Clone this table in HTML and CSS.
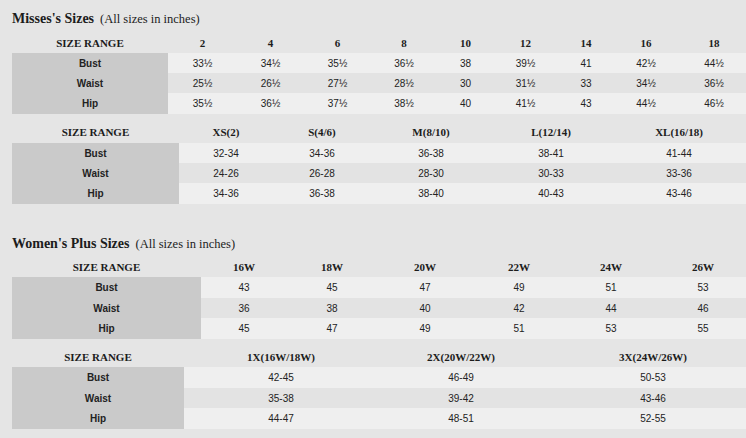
FILE: index.html
```html
<!DOCTYPE html>
<html>
<head>
<meta charset="utf-8">
<link rel="stylesheet" href="styles.css">
</head>
<body>
<div class="page">
  <h2 class="title title-first"><b>Misses's Sizes</b> <span class="note">(All sizes in inches)</span></h2>

  <table class="chart t1">
    <colgroup>
      <col style="width:156px">
      <col style="width:69px"><col style="width:67px"><col style="width:67px"><col style="width:66px"><col style="width:57px"><col style="width:63px"><col style="width:58px"><col style="width:62px"><col style="width:74px">
    </colgroup>
    <tr class="head"><th>SIZE RANGE</th><th>2</th><th>4</th><th>6</th><th>8</th><th>10</th><th>12</th><th>14</th><th>16</th><th>18</th></tr>
    <tr class="odd"><td class="label">Bust</td><td>33½</td><td>34½</td><td>35½</td><td>36½</td><td>38</td><td>39½</td><td>41</td><td>42½</td><td>44½</td></tr>
    <tr class="even"><td class="label">Waist</td><td>25½</td><td>26½</td><td>27½</td><td>28½</td><td>30</td><td>31½</td><td>33</td><td>34½</td><td>36½</td></tr>
    <tr class="odd last"><td class="label">Hip</td><td>35½</td><td>36½</td><td>37½</td><td>38½</td><td>40</td><td>41½</td><td>43</td><td>44½</td><td>46½</td></tr>
  </table>

  <table class="chart t2">
    <colgroup>
      <col style="width:167px">
      <col style="width:94px"><col style="width:98px"><col style="width:120px"><col style="width:120px"><col style="width:136px">
    </colgroup>
    <tr class="head tall"><th>SIZE RANGE</th><th>XS(2)</th><th>S(4/6)</th><th>M(8/10)</th><th>L(12/14)</th><th>XL(16/18)</th></tr>
    <tr class="odd"><td class="label">Bust</td><td>32-34</td><td>34-36</td><td>36-38</td><td>38-41</td><td>41-44</td></tr>
    <tr class="even"><td class="label">Waist</td><td>24-26</td><td>26-28</td><td>28-30</td><td>30-33</td><td>33-36</td></tr>
    <tr class="odd last"><td class="label">Hip</td><td>34-36</td><td>36-38</td><td>38-40</td><td>40-43</td><td>43-46</td></tr>
  </table>

  <h2 class="title title-second"><b>Women's Plus Sizes</b> <span class="note">(All sizes in inches)</span></h2>

  <table class="chart t3">
    <colgroup>
      <col style="width:189px">
      <col style="width:86px"><col style="width:90px"><col style="width:96px"><col style="width:92px"><col style="width:92px"><col style="width:92px">
    </colgroup>
    <tr class="head"><th>SIZE RANGE</th><th>16W</th><th>18W</th><th>20W</th><th>22W</th><th>24W</th><th>26W</th></tr>
    <tr class="odd first"><td class="label">Bust</td><td>43</td><td>45</td><td>47</td><td>49</td><td>51</td><td>53</td></tr>
    <tr class="even"><td class="label">Waist</td><td>36</td><td>38</td><td>40</td><td>42</td><td>44</td><td>46</td></tr>
    <tr class="odd last"><td class="label">Hip</td><td>45</td><td>47</td><td>49</td><td>51</td><td>53</td><td>55</td></tr>
  </table>

  <table class="chart t4">
    <colgroup>
      <col style="width:172px">
      <col style="width:194px"><col style="width:166px"><col style="width:218px">
    </colgroup>
    <tr class="head"><th>SIZE RANGE</th><th>1X(16W/18W)</th><th>2X(20W/22W)</th><th>3X(24W/26W)</th></tr>
    <tr class="odd first"><td class="label">Bust</td><td>42-45</td><td>46-49</td><td>50-53</td></tr>
    <tr class="even"><td class="label">Waist</td><td>35-38</td><td>39-42</td><td>43-46</td></tr>
    <tr class="odd last"><td class="label">Hip</td><td>44-47</td><td>48-51</td><td>52-55</td></tr>
  </table>
</div>
</body>
</html>
```

FILE: styles.css
```css
html, body {
  margin: 0;
  padding: 0;
  background: #e5e5e5;
  overflow: hidden;
}

.page {
  width: 760px;
  padding-left: 12px;
  color: #222;
}

.title {
  margin: 0;
  height: 16px;
  line-height: 16px;
  font-family: "Liberation Serif", "Times New Roman", serif;
  font-weight: normal;
  color: #1c1c1c;
  white-space: nowrap;
}

.title b {
  font-size: 14px;
  font-weight: bold;
}

.title .note {
  font-size: 12.5px;
}

.title-first {
  padding-top: 7px;
  margin-bottom: 9px;
}

.title-second {
  margin-top: 28px;
  margin-bottom: 8px;
}

.chart {
  border-collapse: collapse;
  border-spacing: 0;
  table-layout: fixed;
  margin-bottom: 7px;
}

.chart th,
.chart td {
  padding: 0;
  text-align: center;
  vertical-align: middle;
  white-space: nowrap;
}

.chart th {
  height: 21px;
  font-family: "Liberation Serif", "Times New Roman", serif;
  font-weight: bold;
  font-size: 11px;
  color: #1c1c1c;
}

.chart .tall th {
  height: 22px;
}

.chart td {
  height: 20px;
  font-family: "Liberation Sans", Arial, sans-serif;
  font-size: 10px;
  color: #222;
}

.chart .first td,
.chart .last td {
  height: 21px;
}

.chart .odd td {
  background: #efefef;
}

.chart .even td {
  background: #e3e3e3;
}

.chart td.label {
  background: #cacaca;
  font-weight: bold;
}
```
